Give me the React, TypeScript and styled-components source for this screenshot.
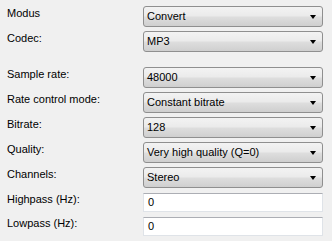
import { Fragment } from 'react';
import styled, { createGlobalStyle } from 'styled-components';

const GlobalStyle = createGlobalStyle`
  html, body {
    margin: 0;
    padding: 0;
    background: #f0f0f0;
  }
  body {
    font-family: "Liberation Sans", Arial, sans-serif;
    font-size: 11px;
    color: #000;
  }
`;

const Panel = styled.div`
  width: 332px;
  height: 241px;
  box-sizing: border-box;
  padding: 6px 0 0 7px;
  overflow: hidden;
`;

const Form = styled.div`
  display: grid;
  grid-template-columns: 136px 180px;
  row-gap: 4px;
`;

const Spacer = styled.div`
  grid-column: 1 / span 2;
  height: 11px;
  margin-top: -4px;
`;

const Label = styled.div`
  line-height: 13px;
  padding-top: 1px;
  white-space: nowrap;
`;

const Combo = styled.div`
  position: relative;
  height: 21px;
  box-sizing: border-box;
  border: 1px solid #8f8f8f;
  border-radius: 3px;
  background: linear-gradient(#f3f3f3 0%, #ebebeb 45%, #dddddd 55%, #cfcfcf 100%);
  padding-left: 3px;
  line-height: 19px;
  white-space: nowrap;
`;

const Arrow = styled.span`
  position: absolute;
  right: 6px;
  top: 8px;
  width: 0;
  height: 0;
  border-left: 3.5px solid transparent;
  border-right: 3.5px solid transparent;
  border-top: 4px solid #000;
`;

const Input = styled.div`
  height: 19px;
  margin-top: 1px;
  box-sizing: border-box;
  background: #fff;
  border: 1px solid #dfe3e8;
  border-top-color: #acaeb4;
  padding-left: 4px;
  line-height: 17px;
`;

const Select = ({ value }: { value: string }) => (
  <Combo>
    {value}
    <Arrow />
  </Combo>
);

const rows: { label: string; value: string; kind: 'select' | 'input' }[] = [
  { label: 'Sample rate:', value: '48000', kind: 'select' },
  { label: 'Rate control mode:', value: 'Constant bitrate', kind: 'select' },
  { label: 'Bitrate:', value: '128', kind: 'select' },
  { label: 'Quality:', value: 'Very high quality (Q=0)', kind: 'select' },
  { label: 'Channels:', value: 'Stereo', kind: 'select' },
  { label: 'Highpass (Hz):', value: '0', kind: 'input' },
  { label: 'Lowpass (Hz):', value: '0', kind: 'input' },
];

export default function App() {
  return (
    <>
      <GlobalStyle />
      <Panel>
        <Form>
          <Label>Modus</Label>
          <Select value="Convert" />
          <Label>Codec:</Label>
          <Select value="MP3" />
          <Spacer />
          {rows.map((r) => (
            <Fragment key={r.label}>
              <Label>{r.label}</Label>
              {r.kind === 'select' ? <Select value={r.value} /> : <Input>{r.value}</Input>}
            </Fragment>
          ))}
        </Form>
      </Panel>
    </>
  );
}
